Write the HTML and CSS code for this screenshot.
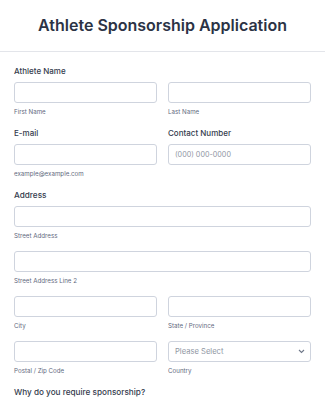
FILE: index.html
```html
<!DOCTYPE html>
<html lang="en">
<head>
  <meta charset="UTF-8">
  <title>Athlete Sponsorship Application</title>
  <link rel="stylesheet" href="styles.css">
</head>
<body>

  <div class="header">
    <h1>Athlete Sponsorship Application</h1>
  </div>

  <form class="form">
    <div class="label">Athlete Name</div>
    <div class="row">
      <div class="cell">
        <input type="text" class="input">
        <div class="sub">First Name</div>
      </div>
      <div class="cell">
        <input type="text" class="input">
        <div class="sub">Last Name</div>
      </div>
    </div>

    <div class="row">
      <div class="cell">
        <div class="label">E-mail</div>
        <input type="text" class="input">
        <div class="sub">example@example.com</div>
      </div>
      <div class="cell">
        <div class="label">Contact Number</div>
        <input type="text" class="input" placeholder="(000) 000-0000">
      </div>
    </div>

    <div class="label label-lg">Address</div>
    <input type="text" class="input">
    <div class="sub">Street Address</div>
    <input type="text" class="input">
    <div class="sub">Street Address Line 2</div>
    <div class="row">
      <div class="cell">
        <input type="text" class="input">
        <div class="sub">City</div>
      </div>
      <div class="cell">
        <input type="text" class="input">
        <div class="sub">State / Province</div>
      </div>
    </div>
    <div class="row">
      <div class="cell">
        <input type="text" class="input">
        <div class="sub">Postal / Zip Code</div>
      </div>
      <div class="cell">
        <div class="select">
          <span>Please Select</span>
          <svg width="7" height="5" viewBox="0 0 7 5"><path d="M1 1l2.5 2.5L6 1" fill="none" stroke="#6f7889" stroke-width="1.1"/></svg>
        </div>
        <div class="sub">Country</div>
      </div>
    </div>

    <div class="label label-lg">Why do you require sponsorship?</div>
  </form>

</body>
</html>
```

FILE: styles.css
```css
/* — Base — */
* { box-sizing: border-box; margin: 0; padding: 0; }
body {
  font-family: Inter, "Noto Sans", sans-serif;
  background: #fff;
  color: #2c3345;
}

/* — Header — */
.header {
  height: 52px;
  border-bottom: 1px solid #e3e5ea;
  display: flex;
  align-items: center;
  justify-content: center;
}
.header h1 {
  font-size: 16px;
  font-weight: 600;
  margin-top: -1px;
}

/* — Form — */
.form {
  padding: 13px 14px 0;
}
.label {
  font-size: 8px;
  font-weight: 500;
  line-height: 12px;
  margin-bottom: 5px;
  color: #343b4d;
}
.label-lg {
  font-size: 8.2px;
}
.row {
  display: flex;
  gap: 11px;
}
.cell {
  flex: 1;
  min-width: 0;
}
.input, .select {
  display: block;
  width: 100%;
  height: 21px;
  border: 1px solid #cfd4de;
  border-radius: 3px;
  background: #fff;
  font-family: inherit;
  font-size: 7.2px;
  padding: 0 6px;
  outline: none;
}
.input::placeholder {
  color: #8f96a3;
}
.select {
  display: flex;
  align-items: center;
  justify-content: space-between;
  color: #8f96a3;
  font-size: 7.6px;
  padding-right: 5px;
}
.sub {
  font-size: 6.2px;
  line-height: 10px;
  color: #5f6a80;
  margin: 4px 0 10px;
}
```
